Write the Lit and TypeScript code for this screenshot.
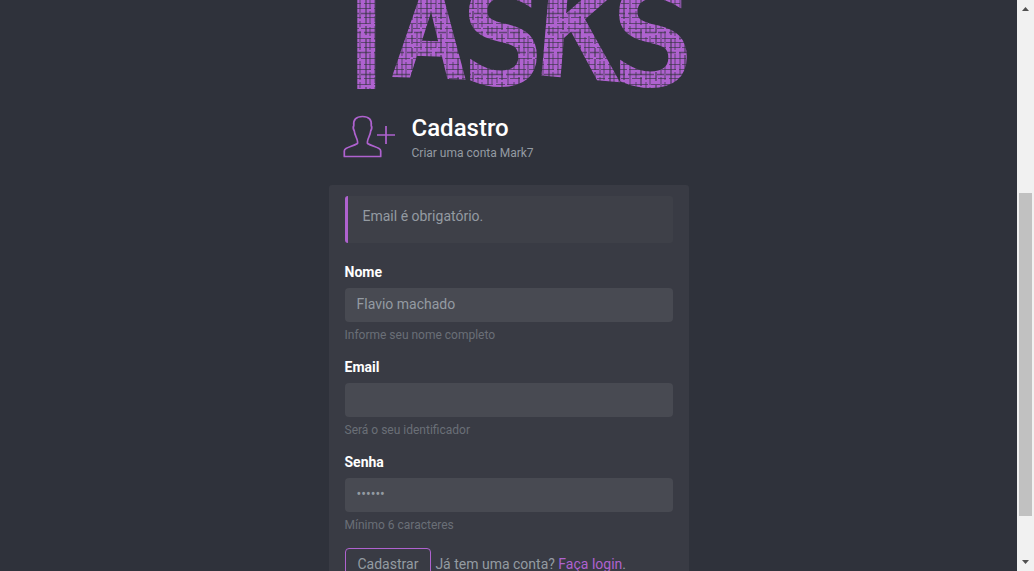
import { LitElement, html, css, svg } from "lit";
import { customElement } from "lit/decorators.js";

interface Field {
  id: string;
  label: string;
  type: string;
  value: string;
  help: string;
}

const FIELDS: Field[] = [
  { id: "nome", label: "Nome", type: "text", value: "Flavio machado", help: "Informe seu nome completo" },
  { id: "email", label: "Email", type: "email", value: "", help: "Será o seu identificador" },
  { id: "senha", label: "Senha", type: "password", value: "123456", help: "Mínimo 6 caracteres" },
];

// Fabric weave of the logo: broken threads at uneven distances.
const THREADS = [2, 7, 12, 16, 22, 27, 31, 37, 41, 46, 51, 57];

@customElement("task-logo")
export class TaskLogo extends LitElement {
  static styles = css`
    :host { display: block; }
    svg { display: block; width: 100%; height: auto; }
    .word {
      font-family: "DejaVu Sans Mono", monospace;
      font-weight: 400;
      font-size: 132px;
      stroke-width: 6px;
    }
    .tall { font-size: 160px; stroke-width: 2px; }
    .short { font-size: 116px; }
  `;

  render() {
    return html`<svg viewBox="0 0 360 96" role="img" aria-label="Tasks">
      <defs>
        <pattern id="weave" width="61" height="61" patternUnits="userSpaceOnUse">
          <rect width="61" height="61" fill="#af62cf" />
          ${THREADS.map((p, i) => svg`
            <path d=${`M${p} 0V61`} stroke="#2f323b" stroke-width=${i % 3 === 1 ? 1.6 : 1.1}
              stroke-opacity=".6" stroke-dasharray=${`${9 + (i % 4) * 5} 2 ${6 + (i % 3) * 3} 4`} />
            <path d=${`M0 ${p + 1.5}H61`} stroke="#2f323b" stroke-width=${i % 4 === 2 ? 1.6 : 1.1}
              stroke-opacity=".6" stroke-dasharray=${`${8 + (i % 3) * 6} 3 ${11 - (i % 3) * 2} 2`} />
          `)}
        </pattern>
      </defs>
      <text class="word" fill="url(#weave)" stroke="url(#weave)"><tspan class="tall" x="-11" y="88">T</tspan><tspan class="short" x="65" y="74" rotate="2">A</tspan><tspan x="134" y="82">S</tspan><tspan x="207" y="72" rotate="5">K</tspan><tspan x="284" y="83">S</tspan></text>
    </svg>`;
  }
}

@customElement("app-root")
export class AppRoot extends LitElement {
  static styles = css`
    :host {
      display: flex;
      height: 100vh;
      overflow: hidden;
      background: #2f323b;
      color: #949ba2;
      font-family: Roboto, sans-serif;
      font-size: 14px;
      line-height: 20px;
    }
    * { box-sizing: border-box; }
    main { flex: 1; min-width: 0; overflow: hidden; }
    .column { width: 100%; max-width: 360px; margin: 0 auto; }
    .heading { display: flex; align-items: flex-start; gap: 16px; padding: 19px 14px 20px; }
    .icon { width: 53px; height: 44px; flex: none; }
    h1 { margin: 0; color: #fff; font-size: 24px; line-height: 26px; font-weight: 500; }
    small { display: block; font-size: 12px; line-height: 24px; }
    .card { padding: 11px 16px 20px; border-radius: 3px; background: #393b44; }
    .alert {
      padding: 10px 15px 16px;
      border-left: 3px solid #af62cf;
      border-radius: 3px;
      background: #3e4048;
      min-height: 47px;
    }
    form { padding-top: 19px; }
    .field { margin-bottom: 15px; }
    label { display: block; margin-bottom: 6px; color: #fff; font-weight: 700; }
    input {
      display: block;
      width: 100%;
      height: 34px;
      padding: 5px 12px 7px;
      border: 0;
      border-radius: 4px;
      outline: 0;
      background: #484a52;
      color: #949ba2;
      font: inherit;
    }
    .help { display: block; padding-top: 3px; color: #6a6f77; font-size: 12px; line-height: 20px; height: 20px; }
    .actions { display: flex; align-items: center; gap: 4px; padding-top: 1px; white-space: nowrap; }
    button {
      padding: 5px 12px 7px;
      border: 1px solid #af62cf;
      border-radius: 4px;
      background: transparent;
      color: inherit;
      font: inherit;
    }
    .signin { padding-bottom: 2px; }
    a { color: #af62cf; text-decoration: none; }
    .scrollbar {
      display: flex;
      flex-direction: column;
      align-items: center;
      width: 17px;
      background: #f1f1f1;
    }
    .arrow { width: 17px; height: 17px; flex: none; fill: #505050; }
    .track { flex: 1; width: 13px; }
    .before { height: 32.8%; }
    .thumb { height: 60.2%; background: #c1c1c1; }
  `;

  private field(f: Field) {
    return html`<div class="field">
      <label for=${f.id}>${f.label}</label>
      <input id=${f.id} type=${f.type} .value=${f.value} aria-describedby=${f.id + "-help"} autocomplete="off" />
      <span class="help" id=${f.id + "-help"}>${f.help}</span>
    </div>`;
  }

  render() {
    return html`
      <main>
        <div class="column">
          <task-logo></task-logo>
          <header class="heading">
            <svg class="icon" viewBox="0 0 53 44" fill="none" stroke="#af62cf" stroke-width="1.7" stroke-linejoin="round" aria-hidden="true">
              <path d="M14.500 28.500C15.500 25 11.500 20.500 11.300 16C10 14 10 12 10.800 10.500C10 5 13 1.500 19.500 1.500S29 5 28.200 10.500C29 12 29 14 27.700 16C27.500 20.500 23.500 25 24.500 28.500C28 30.500 33 32 36 33.500Q37.700 34.500 37.700 36V41.500H1.300V36Q1.300 34.500 3 33.500C6 32 11 30.500 14.500 28.500Z" />
              <path d="M34 20H52M43 11V29" />
            </svg>
            <div>
              <h1>Cadastro</h1>
              <small>Criar uma conta Mark7</small>
            </div>
          </header>
          <section class="card">
            <div class="alert" role="alert">Email é obrigatório.</div>
            <form @submit=${(e: Event) => e.preventDefault()}>
              ${FIELDS.map((f) => this.field(f))}
              <div class="actions">
                <button type="submit">Cadastrar</button>
                <span class="signin">Já tem uma conta? <a href="#login">Faça login</a>.</span>
              </div>
            </form>
          </section>
        </div>
      </main>
      <div class="scrollbar" aria-hidden="true">
        <svg class="arrow" viewBox="0 0 17 17"><path d="M5 11L8.500 7L12 11Z" /></svg>
        <div class="track">
          <div class="before"></div>
          <div class="thumb"></div>
        </div>
        <svg class="arrow" viewBox="0 0 17 17"><path d="M5 6L8.500 10L12 6Z" /></svg>
      </div>
    `;
  }
}
